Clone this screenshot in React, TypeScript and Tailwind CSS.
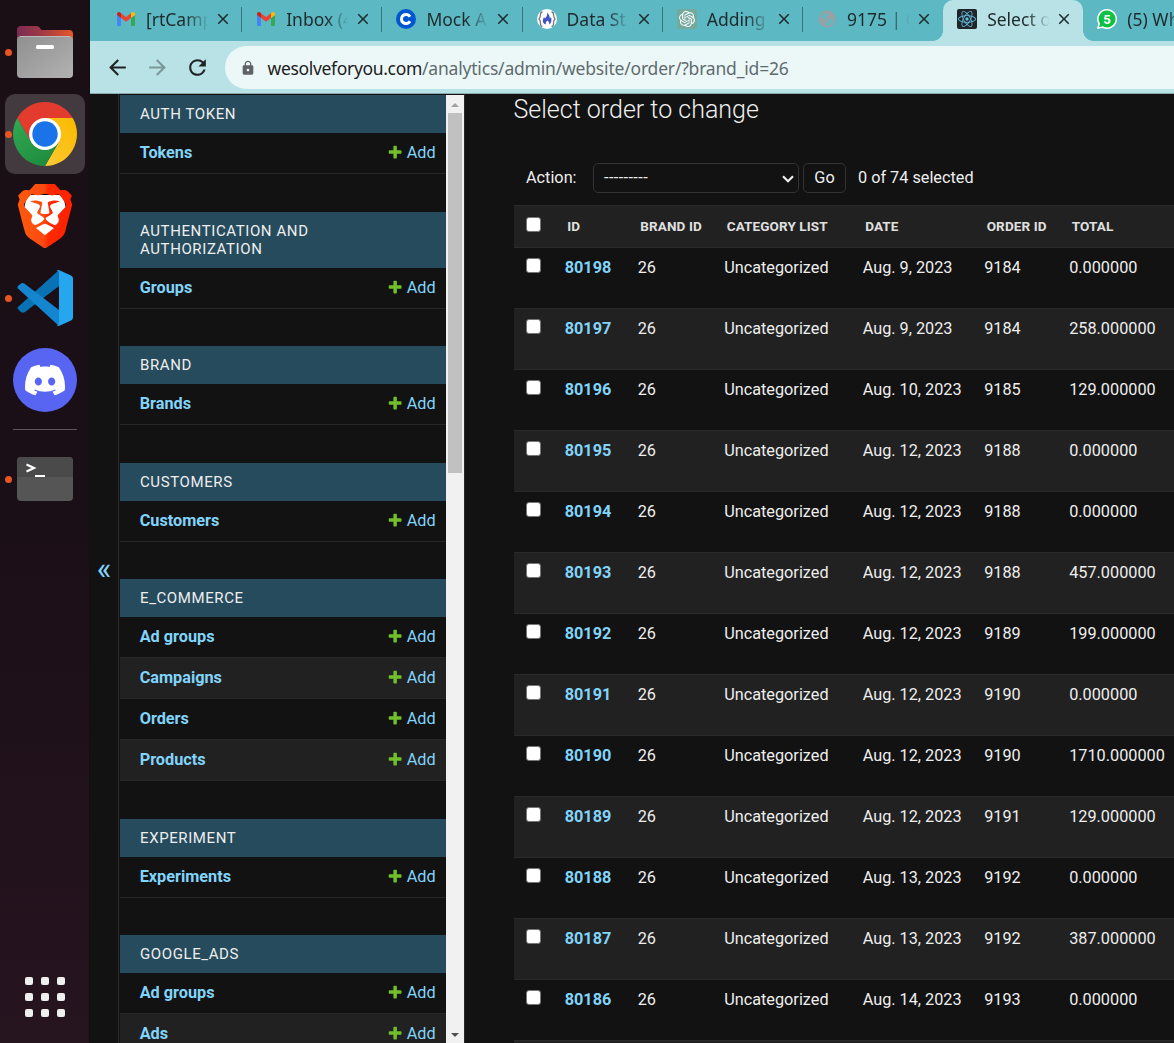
import React from 'react';
import { MdArrowBack, MdArrowForward, MdClose, MdLock, MdRefresh } from 'react-icons/md';
import { SiBrave, SiDiscord, SiOpenai, SiReact } from 'react-icons/si';

/* ---------- Dock ---------- */

function FolderIcon() {
  return (
    <svg width="56" height="52" viewBox="0 0 56 52">
      <defs>
        <linearGradient id="folderBack" x1="0" x2="1">
          <stop offset="0" stopColor="#7a2a55" />
          <stop offset="0.45" stopColor="#a03a44" />
          <stop offset="1" stopColor="#e8562a" />
        </linearGradient>
        <linearGradient id="folderFront" x1="0" x2="1" y1="0" y2="1">
          <stop offset="0" stopColor="#8f8f8f" />
          <stop offset="1" stopColor="#b2b2b2" />
        </linearGradient>
      </defs>
      <path d="M0 4a4 4 0 0 1 4-4h15.500q1.500 0 2.500 1l2.500 3H52a4 4 0 0 1 4 4v14H0z" fill="url(#folderBack)" />
      <rect y="10" width="56" height="42" rx="4" fill="url(#folderFront)" />
      <path d="M3 10.500h50" stroke="#c4c4c4" strokeWidth="0.800" />
      <rect x="19" y="19" width="18" height="4" rx="1.500" fill="#fff" />
    </svg>
  );
}

function ChromeIcon() {
  return (
    <svg width="64" height="64" viewBox="0 0 64 64">
      <defs>
        <linearGradient id="chromeGreen" x1="0" x2="0.600" y1="0" y2="1">
          <stop offset="0" stopColor="#34a853" />
          <stop offset="1" stopColor="#1e8e3e" />
        </linearGradient>
        <linearGradient id="chromeYellow" x1="0.700" x2="0" y1="0" y2="1">
          <stop offset="0" stopColor="#fbbc04" />
          <stop offset="1" stopColor="#fcc934" />
        </linearGradient>
      </defs>
      <path d="M4.290 16A32 32 0 0 1 59.710 16H32L18.140 40z" fill="#e33b2e" />
      <path d="M59.710 16A32 32 0 0 1 32 64L45.860 40L32 16z" fill="url(#chromeYellow)" />
      <path d="M32 64A32 32 0 0 1 4.290 16L18.140 40L45.860 40z" fill="url(#chromeGreen)" />
      <circle cx="32" cy="32" r="16" fill="#fff" />
      <circle cx="32" cy="32" r="12.700" fill="#1a73e8" />
    </svg>
  );
}

function BraveIcon() {
  return (
    <svg width="64" height="64" viewBox="0 0 64 64">
      <defs>
        <linearGradient id="braveFill" x1="0" x2="1">
          <stop offset="0" stopColor="#ff5a0a" />
          <stop offset="0.480" stopColor="#fb4a12" />
          <stop offset="0.560" stopColor="#ff2a00" />
          <stop offset="1" stopColor="#ff2000" />
        </linearGradient>
      </defs>
      <path d="M14 11H50L54 30L46 50L32 58L18 50L10 30Z" fill="#fff" />
      <SiBrave size={64} fill="url(#braveFill)" />
    </svg>
  );
}

function VsCodeIcon() {
  return (
    <svg width="56" height="56" viewBox="0 0 56 56">
      <path d="M42 0L1.500 36.500Q-.500 38 1.500 39.500L4 42Q5.500 43.500 8 42L42 16z" fill="#0872b5" />
      <path d="M42 56L1.500 19Q-.500 17 1.500 15.500L4 13.500Q5.500 12.500 8 14L42 40z" fill="#1485cf" />
      <path d="M39 .500Q41 -.400 43 .500L54 5.500Q56 6.500 56 8.500V47.500Q56 49.500 54 50.500L43 55.500Q41 56.400 39 55Q42 56 42 53V3Q42 0 39 .500z" fill="#26a6ee" />
    </svg>
  );
}

function DiscordIcon() {
  return (
    <span className="flex size-16 items-center justify-center rounded-full bg-[#5865f2] text-white">
      <SiDiscord size={40} />
    </span>
  );
}

function TerminalIcon() {
  return (
    <svg width="56" height="44" viewBox="0 0 56 44">
      <rect width="56" height="44" rx="4" fill="#555" />
      <path d="M0 20V4a4 4 0 0 1 4-4h48a4 4 0 0 1 4 4v16z" fill="#4a4a4a" />
      <path d="M9.500 7.500L17 11L9.500 14.500" stroke="#fff" strokeWidth="2.200" fill="none" />
      <path d="M18 19h10" stroke="#fff" strokeWidth="2" />
    </svg>
  );
}

function DockItem({ running, active, children }: { running?: boolean; active?: boolean; children: React.ReactNode }) {
  return (
    <div className={`relative flex size-20 items-center justify-center rounded-[10px] ${active ? 'bg-[#433a40]' : ''}`}>
      {running && <span className="absolute top-[36.500px] left-0 size-[7px] rounded-full bg-[#e95420]" />}
      {children}
    </div>
  );
}

function Dock() {
  return (
    <nav className="flex w-[89px] shrink-0 flex-col items-center bg-linear-to-b from-[#1a0f15] via-[#1b0f17] to-[#26141f] pt-3 pr-px pl-[1px]">
      <div className="flex flex-col gap-0.5">
        <DockItem running><FolderIcon /></DockItem>
        <DockItem running active><ChromeIcon /></DockItem>
        <DockItem><BraveIcon /></DockItem>
        <DockItem running><VsCodeIcon /></DockItem>
        <DockItem><DiscordIcon /></DockItem>
      </div>
      <div className="mt-[9px] mb-[9px] h-px w-16 bg-[#5c5559]" />
      <DockItem running><TerminalIcon /></DockItem>
      <div className="mt-auto mb-[26px] grid grid-cols-3 gap-2">
        {Array.from({ length: 9 }, (_, i) => (
          <span key={i} className="size-2 rounded-[2px] bg-[#f0efef]" />
        ))}
      </div>
    </nav>
  );
}

/* ---------- Browser chrome ---------- */

const GmailIcon = () => (
  <svg width="18" height="14" viewBox="0 0 18 14">
    <path d="M0 3v9.500Q0 14 1.300 14H4V6z" fill="#4285f4" />
    <path d="M18 3v9.500Q18 14 16.700 14H14V6z" fill="#34a853" />
    <path d="M14 1.200V6l4-3V2Q18 0 16 0 15.200 0 14 1.200z" fill="#fbbc04" />
    <path d="M4 1.200L9 5l5-3.800V6L9 9.800 4 6z" fill="#ea4335" />
    <path d="M4 1.200V6L0 3V2Q0 0 2 0 2.800 0 4 1.200z" fill="#c5221f" />
  </svg>
);

const LetterCIcon = () => (
  <svg width="20" height="20" viewBox="0 0 20 20">
    <circle cx="10" cy="10" r="10" fill="#0056d2" />
    <path d="M14 7.700A4.600 4.600 0 1 0 14 12.300" fill="none" stroke="#fff" strokeWidth="3" />
  </svg>
);

const FlameIcon = () => (
  <svg width="20" height="20" viewBox="0 0 20 20">
    <circle cx="10" cy="10" r="10" fill="#fff" />
    <path d="M5.500 3Q3.500 3 3.500 5.500T2 10Q3.500 11 3.500 14.500T5.500 17M14.500 3Q16.500 3 16.500 5.500T18 10Q16.500 11 16.500 14.500T14.500 17" fill="none" stroke="#777" strokeWidth="1.300" />
    <path d="M10.500 3.500Q13 7 12.800 9.500L14 8Q15.500 13 12.500 15.500Q12.500 12.500 10.300 11.500Q8.500 13 8.700 15.500Q5 14 6 10.500Q6.500 9 7 8L8 9.500Q10.500 7 10.500 3.500z" fill="#4453c4" />
  </svg>
);

const OpenAiIcon = () => (
  <span className="flex size-5 items-center justify-center rounded-[2px] bg-[#75a99c] text-white">
    <SiOpenai size={16} />
  </span>
);

const GlobeIcon = () => (
  <svg width="18" height="18" viewBox="0 0 18 18">
    <circle cx="9" cy="9" r="7.700" fill="#6cb4bc" stroke="#9aa0a6" strokeWidth="1.600" />
    <path d="M8 1.500L15 3.500 16.500 9 14.500 10 12.500 8.500 10.500 9.500 9 8V6L11 4.500 8 4zM1.500 8L6 8.500 9.500 11 9 12.500 7 13.500 7 16.500 3.500 14z" fill="#9aa0a6" />
  </svg>
);

const ReactIcon = () => (
  <span className="flex size-5 items-center justify-center rounded-[2px] bg-[#20232a] text-[#61bfdc]">
    <SiReact size={18} />
  </span>
);

const WhatsAppIcon = () => (
  <svg width="20" height="20" viewBox="0 0 20 20">
    <path d="M10 0a10 10 0 1 1-4.500 18.900L0 20l1.200-5.300A10 10 0 0 1 10 0z" fill="#fff" />
    <path d="M10 1.600a8.400 8.400 0 1 1-4.200 15.600L2 18.200l1-3.600A8.400 8.400 0 0 1 10 1.600z" fill="#0dc143" />
    <text x="10" y="14.800" textAnchor="middle" fontSize="13" fontWeight="700" fontFamily="Roboto, sans-serif" fill="#fff">5</text>
  </svg>
);

const tabs: { title: string; icon: React.ReactNode; active?: boolean; noLine?: boolean }[] = [
  { title: '[rtCamp', icon: <GmailIcon /> },
  { title: 'Inbox (4', icon: <GmailIcon /> },
  { title: 'Mock A', icon: <LetterCIcon /> },
  { title: 'Data St', icon: <FlameIcon /> },
  { title: 'Adding', icon: <OpenAiIcon /> },
  { title: '9175 | C', icon: <GlobeIcon />, noLine: true },
  { title: 'Select o', icon: <ReactIcon />, active: true, noLine: true },
  { title: '(5) Wh', icon: <WhatsAppIcon />, noLine: true },
];

function Tab({ title, icon, active, noLine }: (typeof tabs)[number]) {
  return (
    <div className={`relative flex h-[41px] w-[140.200px] shrink-0 items-center pb-[3px] ${active ? 'rounded-t-[10px] bg-[#b8e2e5]' : ''}`}>
      {active && (
        <>
          <span className="absolute bottom-0 -left-2.5 size-2.5 bg-[radial-gradient(circle_at_top_left,transparent_9.500px,#b8e2e5_10px)]" />
          <span className="absolute -right-2.5 bottom-0 size-2.5 bg-[radial-gradient(circle_at_top_right,transparent_9.500px,#b8e2e5_10px)]" />
        </>
      )}
      <span className="ml-3.5 flex w-5 shrink-0 justify-center">{icon}</span>
      <span className="ml-[10px] w-[66px] shrink-0 whitespace-nowrap text-[17.500px] leading-6 text-[#1f2a2d] [mask-image:linear-gradient(to_right,black_60%,transparent_95%)]">
        {title}
      </span>
      <MdClose className="ml-[2px] shrink-0 text-[#1f2a2d]" size={18} />
      {!noLine && <span className="absolute top-[7px] right-0 h-[25px] w-px bg-[#3a747b]" />}
    </div>
  );
}

function BrowserChrome() {
  return (
    <header className="shrink-0 font-['Noto_Sans',sans-serif]">
      <div className="flex h-[41px] overflow-hidden bg-[#5cb8c2] pl-[12px]">
        {tabs.map((t) => (
          <Tab key={t.title} {...t} />
        ))}
      </div>
      <div className="flex h-[53px] items-start border-b border-[#8aa9ac] bg-[#b8e2e5] pt-[5px]">
        <div className="flex h-[43px] w-[135px] items-center pl-[15px] text-[#1f2324]">
          <MdArrowBack size={25} />
          <MdArrowForward size={25} className="ml-[15px] text-[#7b979a]" />
          <MdRefresh size={25} className="ml-[15px]" />
        </div>
        <div className="flex h-[43px] flex-1 items-center rounded-l-full bg-[#ecf8f8] pl-[15px]">
          <MdLock size={16} className="text-[#5f6368]" />
          <p className="ml-[11.500px] text-[17.500px] leading-6 whitespace-nowrap text-[#5f6b6e]">
            <span className="tracking-[-0.330px] text-[#1c2021]">wesolveforyou.com</span>
            <span className="tracking-[-0.190px]">/analytics/admin/website/order/?brand_id=26</span>
          </p>
        </div>
      </div>
    </header>
  );
}

/* ---------- Admin sidebar ---------- */

const modules = [
  { name: 'Auth Token', models: ['Tokens'], space: 'mb-[38px]' },
  { name: 'Authentication and Authorization', models: ['Groups'], space: 'mb-[37px]' },
  { name: 'Brand', models: ['Brands'], space: 'mb-[38px]' },
  { name: 'Customers', models: ['Customers'], space: 'mb-[37px]' },
  { name: 'E_Commerce', models: ['Ad groups', 'Campaigns', 'Orders', 'Products'], space: 'mb-[38px]' },
  { name: 'Experiment', models: ['Experiments'], space: 'mb-[37px]' },
  { name: 'Google_Ads', models: ['Ad groups', 'Ads'], space: '' },
];

function PlusIcon() {
  return (
    <svg width="16.250" height="16.250" viewBox="0 0 1792 1792" fill="#70bf2b">
      <path d="M1600 796v192q0 40-28 68t-68 28h-416v416q0 40-28 68t-68 28h-192q-40 0-68-28t-28-68v-416h-416q-40 0-68-28t-28-68v-192q0-40 28-68t68-28h416v-416q0-40 28-68t68-28h192q40 0 68 28t28 68v416h416q40 0 68 28t28 68z" />
    </svg>
  );
}

function Sidebar() {
  return (
    <aside className="w-[326px] shrink-0 overflow-hidden pt-px">
      {modules.map((m) => (
        <section key={m.name} className={m.space}>
          <h2 className="bg-[#264b5d] py-2.5 pr-16 pl-5 text-[15px] leading-[18px] tracking-[0.600px] text-[#eee] uppercase">{m.name}</h2>
          {m.models.map((model) => (
            <div key={model} className="flex h-[41px] items-center border-b border-[#272727] pr-[10.300px] pb-px pl-[19.700px] text-[16.250px] leading-5 text-[#81d4fa] even:bg-[#121212] odd:bg-[#212121]">
              <a className="flex-1 font-bold">{model}</a>
              <PlusIcon />
              <a className="ml-[3.800px]">Add</a>
            </div>
          ))}
        </section>
      ))}
    </aside>
  );
}

function Scrollbar() {
  return (
    <div className="mt-px flex w-[18px] shrink-0 flex-col items-center bg-[#f1f1f1]">
      <svg width="18" height="18" viewBox="0 0 18 18"><path d="M5 12L9 8L13 12z" fill="#a3a3a3" /></svg>
      <div className="h-[360px] w-3.5 bg-[#c1c1c1]" />
      <svg className="mt-auto" width="18" height="18" viewBox="0 0 18 18"><path d="M5 8L9 12L13 8z" fill="#505050" /></svg>
    </div>
  );
}

/* ---------- Change list ---------- */

const rows = [
  ['80198', 'Aug. 9, 2023', '9184', '0.000000'],
  ['80197', 'Aug. 9, 2023', '9184', '258.000000'],
  ['80196', 'Aug. 10, 2023', '9185', '129.000000'],
  ['80195', 'Aug. 12, 2023', '9188', '0.000000'],
  ['80194', 'Aug. 12, 2023', '9188', '0.000000'],
  ['80193', 'Aug. 12, 2023', '9188', '457.000000'],
  ['80192', 'Aug. 12, 2023', '9189', '199.000000'],
  ['80191', 'Aug. 12, 2023', '9190', '0.000000'],
  ['80190', 'Aug. 12, 2023', '9190', '1710.000000'],
  ['80189', 'Aug. 12, 2023', '9191', '129.000000'],
  ['80188', 'Aug. 13, 2023', '9192', '0.000000'],
  ['80187', 'Aug. 13, 2023', '9192', '387.000000'],
  ['80186', 'Aug. 14, 2023', '9193', '0.000000'],
];

const gridCols = 'grid grid-cols-[50.700px_73px_86.500px_138.500px_121.500px_85px_1fr]';

const Checkbox = () => <span className="ml-3 block size-[15px] rounded-[3px] border border-[#767676] bg-white" />;

function ChangeList() {
  return (
    <main className="min-w-0 flex-1 overflow-hidden pl-[49px]">
      <h1 className="-ml-[0.500px] h-[69px] pt-px text-[25px] leading-[30px] font-light text-[#eee]">Select order to change</h1>
      <div className="flex h-[30px] items-center text-[16.250px] text-[#eee]">
        <span className="w-[79px] pl-3">Action:</span>
        <div className="flex h-[30px] w-[206px] items-center justify-between rounded-[5px] border border-[#333] pr-1 pl-2.5">
          <span className="tracking-[0.400px]">---------</span>
          <svg className="mt-0.5" width="12" height="8" viewBox="0 0 12 8" fill="none" stroke="#eee" strokeWidth="2.200"><path d="M1 1.200L6 6.200L11 1.200" /></svg>
        </div>
        <button className="ml-1 h-[30px] w-[43px] rounded-[5px] border border-[#333] text-center">Go</button>
        <span className="ml-3">0 of 74 selected</span>
      </div>
      <div className="mt-3 w-[700px]">
        <div className={`${gridCols} h-[43px] border-y border-[#2b2b2b] bg-[#212121] text-[13.500px] leading-[41px] font-bold tracking-[0.120px] text-[#e0e0e0]`}>
          <span className="pt-[11px]"><Checkbox /></span>
          {['ID', 'BRAND ID', 'CATEGORY LIST', 'DATE', 'ORDER ID', 'TOTAL'].map((h) => (
            <span key={h} className="pl-[2.500px]">{h}</span>
          ))}
        </div>
        {rows.map(([id, date, order, total]) => (
          <div key={id} className={`${gridCols} h-[61px] border-b border-[#2a2a2a] pt-2.5 text-[16.250px] leading-5 text-[#eee] odd:bg-[#212121]`}>
            <Checkbox />
            <a className="font-bold text-[#81d4fa]">{id}</a>
            <span>26</span>
            <span>Uncategorized</span>
            <span>{date}</span>
            <span>{order}</span>
            <span>{total}</span>
          </div>
        ))}
        <div className="h-[61px] bg-[#212121]" />
      </div>
    </main>
  );
}

export default function App() {
  return (
    <div className="flex h-[1043px] w-[1174px] overflow-hidden bg-[#121212] font-['Roboto',sans-serif]">
      <Dock />
      <div className="flex min-w-0 flex-1 flex-col border-l border-[#10100f]">
        <BrowserChrome />
        <div className="flex min-h-0 flex-1">
          <div className="flex w-7 shrink-0 items-center justify-center text-[31px] leading-none text-[#81d4fa]">
            <span className="-mt-px">«</span>
          </div>
          <div className="w-0.5 shrink-0 border-l border-[#2a2a2a]" />
          <Sidebar />
          <Scrollbar />
          <div className="w-px shrink-0 bg-[#2a2a2a]" />
          <ChangeList />
        </div>
      </div>
    </div>
  );
}
